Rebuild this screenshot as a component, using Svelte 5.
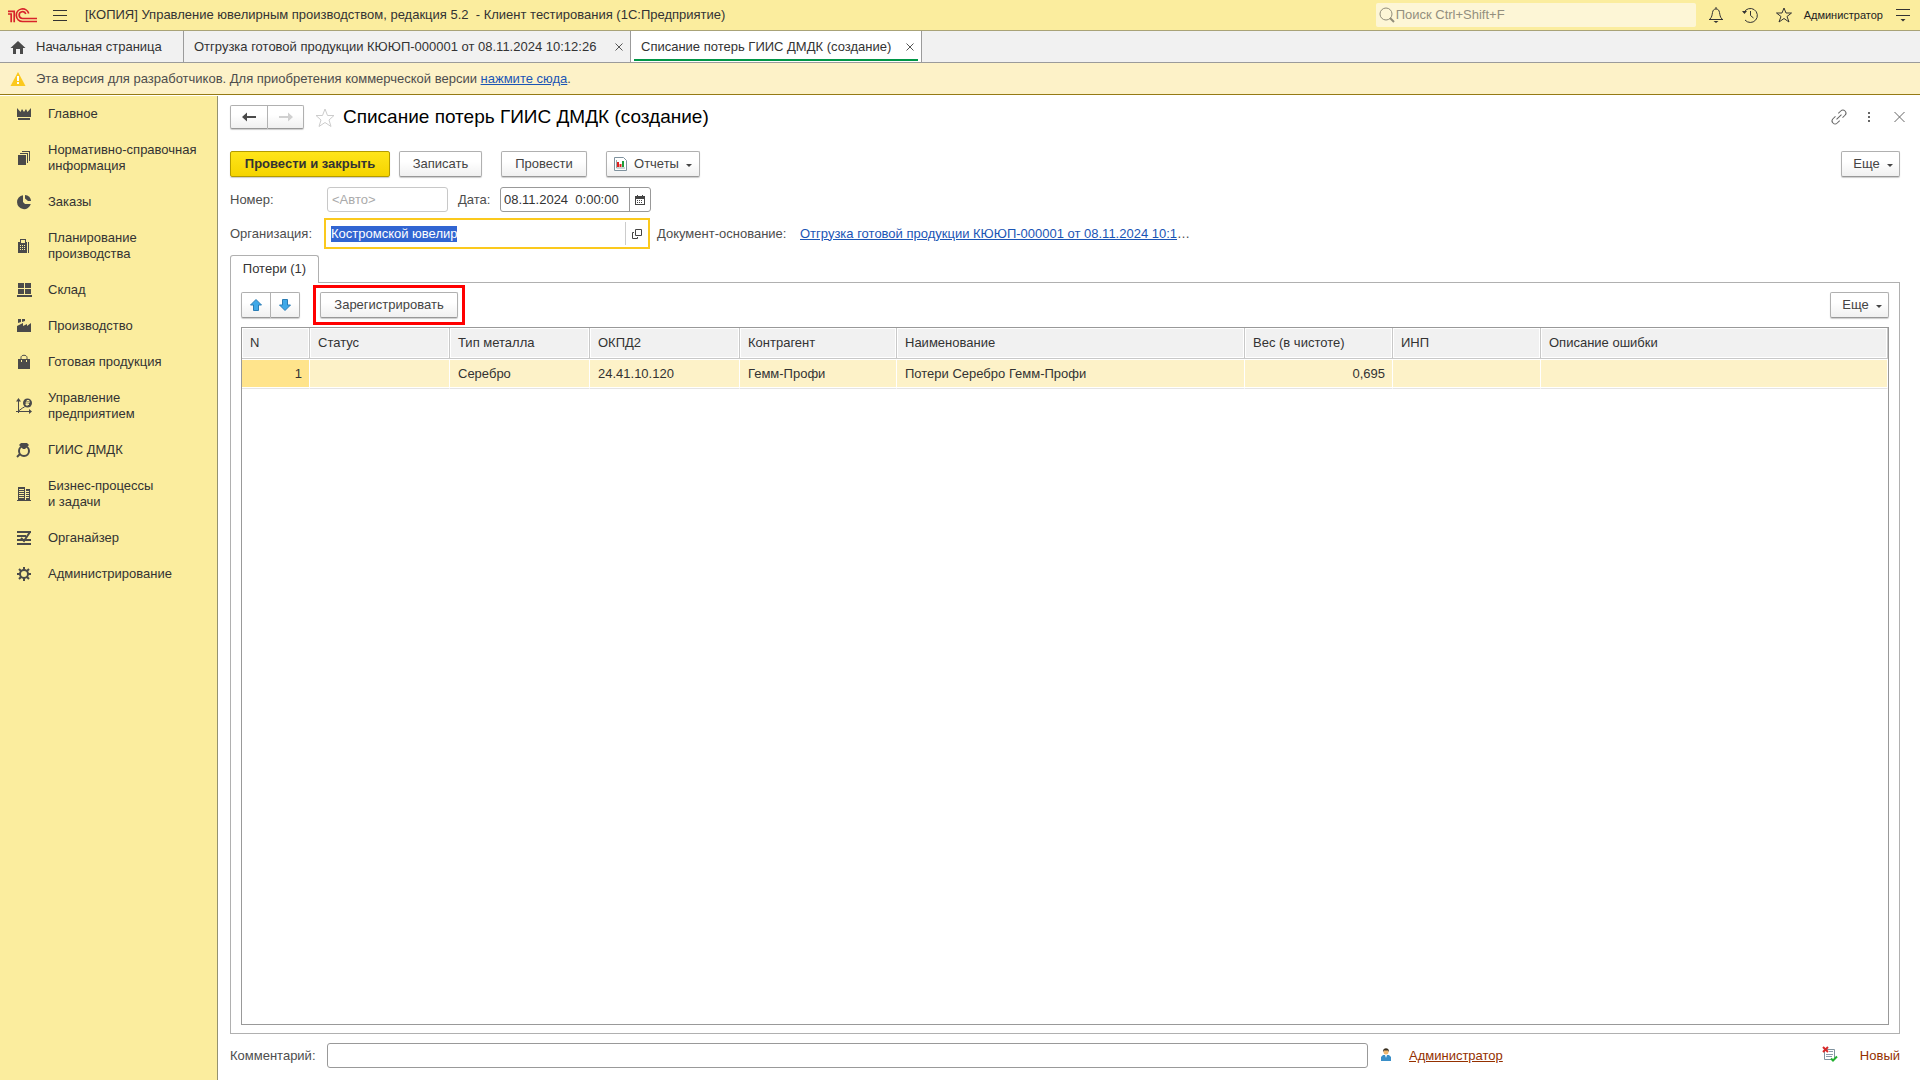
<script>
  import { onMount } from 'svelte';

  let orgInput;
  let org = $state('Костромской ювелир');
  let date = $state('08.11.2024  0:00:00');
  let comment = $state('');

  const sections = [
    { icon: 'crown', lines: ['Главное'] },
    { icon: 'docs', lines: ['Нормативно-справочная', 'информация'] },
    { icon: 'pie', lines: ['Заказы'] },
    { icon: 'calc', lines: ['Планирование', 'производства'] },
    { icon: 'boxes', lines: ['Склад'] },
    { icon: 'factory', lines: ['Производство'] },
    { icon: 'bag', lines: ['Готовая продукция'] },
    { icon: 'chart', lines: ['Управление', 'предприятием'] },
    { icon: 'ring', lines: ['ГИИС ДМДК'] },
    { icon: 'building', lines: ['Бизнес-процессы', 'и задачи'] },
    { icon: 'organizer', lines: ['Органайзер'] },
    { icon: 'gear', lines: ['Администрирование'] }
  ];

  const columns = [
    { name: 'N', cls: 'c-n', value: '1', right: true },
    { name: 'Статус', cls: 'c-status', value: '' },
    { name: 'Тип металла', cls: 'c-metal', value: 'Серебро' },
    { name: 'ОКПД2', cls: 'c-okpd', value: '24.41.10.120' },
    { name: 'Контрагент', cls: 'c-partner', value: 'Гемм-Профи' },
    { name: 'Наименование', cls: 'c-name', value: 'Потери Серебро Гемм-Профи' },
    { name: 'Вес (в чистоте)', cls: 'c-weight', value: '0,695', right: true },
    { name: 'ИНП', cls: 'c-inp', value: '' },
    { name: 'Описание ошибки', cls: 'c-error', value: '' }
  ];

  onMount(() => {
    orgInput.focus();
    orgInput.select();
  });
</script>

{#snippet sectionIcon(name)}
  <svg class="section-icon" viewBox="0 0 16 16" width="16" height="16" aria-hidden="true">
    {#if name === 'crown'}
      <path d="M1 2l3.500 4L6 3l2 3 2-3 1.500 3L15 2v9H1zM2 12h12v2H2z" />
    {:else if name === 'docs'}
      <path d="M2 5h8v10H2zM4 3h8v10h-1V4H4zM6 1h8v10h-1V2H6z" />
    {:else if name === 'pie'}
      <path d="M7 1.200A7 7 0 1 0 14.800 10H9L7 8z" /><path d="M9 1a6 6 0 0 1 6 6h-3L9 4.500z" />
    {:else if name === 'calc'}
      <path fill-rule="evenodd" d="M4 1h6v3h1v11H2V4h2zM5 2v3h4V2zM4 7v1h1V7zM6 7v1h1V7zM8 7v1h1V7zM4 9v1h1V9zM6 9v1h1V9zM8 9v1h1V9zM4 11v1h1v-1zM6 11v1h1v-1zM8 11v1h1v-1z" /><path d="M12 4h1v11h-1z" />
    {:else if name === 'boxes'}
      <path d="M2 1h6v5H2zM9 1h6v5H9zM2 7h6v5H2zM9 7h6v5H9zM1 13h15v2H1z" />
    {:else if name === 'factory'}
      <path d="M2 1h3v3L2 5zM6 1h3v2L6 4zM1 8l6-3v3l4-2v2l4-3v9H1z" />
    {:else if name === 'bag'}
      <path d="M2 5h12v10H2z" /><path class="line" d="M5 7V3.500C5 .5 11 .5 11 3.500V7" /><path class="light" d="M5.500 6v2M10.500 6v2" />
    {:else if name === 'chart'}
      <path d="M2.500 0L5 3.500H0zM16 13.500L13 11v5z" /><path class="line" d="M2.500 3v12M0 13.500h14M2.500 13l4-3 2-1" /><circle cx="11.500" cy="5" r="4.500" /><path class="light" d="M11 8V2.500h2v2.500H9.500M9.500 6.500H13" />
    {:else if name === 'ring'}
      <path d="M5 1h6l2 2-4 4H7L3 3z" /><circle class="thick" cx="8" cy="9" r="5" /><path class="thick" d="M4 12l-3 3" />
    {:else if name === 'building'}
      <path fill-rule="evenodd" d="M2 1h7v13H2zM3 3v1h5V3zM3 5v1h5V5zM3 7v1h5V7zM3 9v1h5V9zM3 11v1h5v-1zM10 3h4v11h-4zM10 5v1h3V5zM10 7v1h3V7zM10 9v1h3V9zM10 11v1h3v-1z" /><path d="M1 14h14v1H1z" />
    {:else if name === 'organizer'}
      <path d="M1 1h14v2H1zM1 5h9v2H1zM1 9h14v2H1zM1 13h14v2H1z" /><path class="thick" d="M14 2l-6 9-3-3" />
    {:else}
      <circle class="thick" cx="8" cy="8" r="4" /><path class="thick" d="M8 1v3M8 12v3M1 8h3M12 8h3M3 3l2 2M11 11l2 2M13 3l-2 2M5 11l-2 2" />
    {/if}
  </svg>
{/snippet}

<div class="app">
  <header class="titlebar">
    <svg class="logo" viewBox="0 0 29 15" width="29" height="15" role="img" aria-label="1С">
      <path d="M0 3.300H6.200V14.300M0 6h3.200v8.300" />
      <path d="M20.700 5.500A6.300 6.300 0 1 0 14.500 13.500H29M17.800 6A3.400 3.400 0 1 0 14.500 10.500H29" />
    </svg>
    <button class="icon-btn burger" aria-label="Главное меню">
      <svg viewBox="0 0 14 11" width="14" height="11"><path d="M0 .5h14M0 5.500h14M0 10.500h14" /></svg>
    </button>
    <h2 class="app-title">[КОПИЯ] Управление ювелирным производством, редакция 5.2&nbsp; - Клиент тестирования (1С:Предприятие)</h2>
    <label class="search">
      <svg viewBox="0 0 16 16" width="16" height="16"><circle cx="7" cy="7" r="6" /><path class="handle" d="M11 11l4 4" /></svg>
      <input type="search" placeholder="Поиск Ctrl+Shift+F" aria-label="Поиск" />
    </label>
    <div class="tools">
      <button class="icon-btn" aria-label="Уведомления">
        <svg viewBox="0 0 16 16" width="16" height="16"><path d="M8 0v2M1 12.500h14M2 12c2-2 2-4 2.500-6.500C5 3 6 2 8 2s3 1 3.500 3.500c.5 2.500.5 4.500 2.500 6.500" /><path class="solid" d="M5.500 14h5L8 16z" /></svg>
      </button>
      <button class="icon-btn" aria-label="История">
        <svg viewBox="0 0 16 16" width="16" height="16"><path d="M2 5.500A7 7 0 1 1 3 13M8.500 4v4.500l3 2.500" /><path class="solid" d="M0 4h5L2.500 7z" /></svg>
      </button>
      <button class="icon-btn" aria-label="Избранное">
        <svg viewBox="0 0 16 16" width="16" height="16"><path d="M8 1l2 5h5.500l-4.500 3.500 2 5.500-5-3.500L3 15l2-5.500L.5 6H6z" /></svg>
      </button>
    </div>
    <button class="user">Администратор</button>
    <button class="icon-btn" aria-label="Настройки">
      <svg viewBox="0 0 14 14" width="14" height="14"><path d="M0 1.500h14M0 7.500h14" /><path class="solid" d="M4.500 11h5L7 13.500z" /></svg>
    </button>
  </header>

  <nav class="tabs" aria-label="Открытые окна">
    <a class="tab home" href="#home">
      <svg viewBox="0 0 16 14" width="16" height="14"><path d="M8 1l7.500 7H13v6h-3V9H6v5H3V8H.5z" /></svg>
      Начальная страница
    </a>
    <div class="tab shipment">
      <a href="#shipment">Отгрузка готовой продукции КЮЮП-000001 от 08.11.2024 10:12:26</a>
      <button aria-label="Закрыть вкладку"><svg viewBox="0 0 8 8" width="8" height="8"><path d="M.5.5l7 7M7.500.5l-7 7" /></svg></button>
    </div>
    <div class="tab active">
      <a href="#losses">Списание потерь ГИИС ДМДК (создание)</a>
      <button aria-label="Закрыть вкладку"><svg viewBox="0 0 8 8" width="8" height="8"><path d="M.5.5l7 7M7.500.5l-7 7" /></svg></button>
    </div>
  </nav>

  <div class="notice">
    <svg viewBox="0 0 16 14" width="16" height="14"><path class="tri" d="M8 0l7.500 14H.5z" /><path class="mark" d="M7 4h2v5H7zM7 10h2v2H7z" /></svg>
    <p>Эта версия для разработчиков. Для приобретения коммерческой версии <a href="#buy">нажмите сюда</a>.</p>
  </div>

  <div class="body">
    <nav class="sections" aria-label="Разделы">
      {#each sections as s}
        <a href={'#' + s.icon}>
          {@render sectionIcon(s.icon)}
          <span>{#each s.lines as line, i}{#if i}<br />{/if}{line}{/each}</span>
        </a>
      {/each}
    </nav>

    <main>
      <div class="form-head">
        <div class="pair">
          <button class="btn nav-btn" aria-label="Назад"><svg viewBox="0 0 14 10" width="14" height="10"><path d="M0 5l5-4.500V4h9v2H5v3.500z" /></svg></button>
          <button class="btn nav-btn fwd" aria-label="Вперед" disabled><svg viewBox="0 0 14 10" width="14" height="10"><path d="M14 5L9 .5V4H0v2h9v3.500z" /></svg></button>
        </div>
        <button class="fav" aria-label="Добавить в избранное"><svg viewBox="0 0 20 19" width="20" height="19"><path d="M10 1l2.500 6.500h6.500l-5 4.500 2 6.500-6-4-6 4 2-6.500-5-4.500h6.500z" /></svg></button>
        <h1>Списание потерь ГИИС ДМДК (создание)</h1>
        <div class="head-tools">
          <button class="icon-btn" aria-label="Получить ссылку"><svg class="chain" viewBox="0 0 16 16" width="16" height="16"><path transform="rotate(-45 8 8)" d="M6 5H2.500a3 3 0 0 0 0 6H6M10 5h3.500a3 3 0 0 1 0 6H10M4.500 8h7" /></svg></button>
          <button class="icon-btn" aria-label="Дополнительно"><svg viewBox="0 0 16 16" width="16" height="16"><path class="solid" d="M7 3h2v2H7zM7 7h2v2H7zM7 11h2v2H7z" /></svg></button>
          <button class="icon-btn" aria-label="Закрыть"><svg viewBox="0 0 16 16" width="16" height="16"><path d="M3.500 3l10 10M13.500 3l-10 10" /></svg></button>
        </div>
      </div>

      <div class="commands">
        <button class="btn primary">Провести и закрыть</button>
        <button class="btn save">Записать</button>
        <button class="btn post">Провести</button>
        <button class="btn reports">
          <svg viewBox="0 0 13 14" width="13" height="14"><path class="sheet" d="M.5.5h9l3 3v10H.5z" /><path class="r" d="M3 5h2v5H3z" /><path class="g" d="M8 4h2v6H8z" /><path class="r" d="M5.500 7h2v3h-2z" /><path class="axis" d="M2.500 3v8H11" /></svg>
          Отчеты <i class="caret"></i>
        </button>
        <button class="btn more">Еще <i class="caret"></i></button>
      </div>

      <div class="field-row">
        <label class="first-label" for="number">Номер:</label>
        <input id="number" class="field number" placeholder="<Авто>" readonly />
        <label class="date-label" for="date">Дата:</label>
        <div class="field date">
          <input id="date" bind:value={date} />
          <button aria-label="Выбрать дату"><svg viewBox="0 0 10 10" width="10" height="10"><path fill-rule="evenodd" d="M0 1h2V0h1v1h4V0h1v1h2v9H0zM1 4v5h8V4z" /><path d="M2 5h1v1H2zM4 5h1v1H4zM6 5h1v1H6zM2 7h1v1H2zM4 7h1v1H4zM6 7h1v1H6z" /></svg></button>
        </div>
      </div>

      <div class="field-row org-row">
        <label class="first-label" for="org">Организация:</label>
        <div class="org">
          <input id="org" bind:this={orgInput} bind:value={org} />
          <button aria-label="Открыть"><svg viewBox="0 0 10 10" width="10" height="10"><path d="M3.500.5h6v6h-6zM2 3.500H.5v6h5V8" /></svg></button>
        </div>
        <span class="basis-label">Документ-основание:</span>
        <span class="basis"><a href="#basis">Отгрузка готовой продукции КЮЮП-000001 от 08.11.2024 10:1</a>…</span>
      </div>

      <div class="page-tabs" role="tablist">
        <button role="tab" aria-selected="true">Потери (1)</button>
      </div>

      <section class="panel">
        <div class="panel-bar">
          <div class="pair">
            <button class="btn arrow" aria-label="Переместить вверх"><svg viewBox="0 0 12 12" width="12" height="12"><path d="M6 .5l5.500 5.500H8.500v5.500h-5V6H.5z" /></svg></button>
            <button class="btn arrow down" aria-label="Переместить вниз"><svg viewBox="0 0 12 12" width="12" height="12"><path d="M6 11.500L.5 6h3V.5h5V6h3z" /></svg></button>
          </div>
          <div class="highlight"><button class="btn register">Зарегистрировать</button></div>
          <button class="btn more">Еще <i class="caret"></i></button>
        </div>
        <div class="grid">
          <table>
            <thead>
              <tr>{#each columns as c}<th class={c.cls} scope="col">{c.name}</th>{/each}</tr>
            </thead>
            <tbody>
              <tr>{#each columns as c}<td class={c.cls} class:right={c.right}>{c.value}</td>{/each}</tr>
            </tbody>
          </table>
        </div>
      </section>

      <footer>
        <label class="first-label" for="comment">Комментарий:</label>
        <input id="comment" class="field comment" bind:value={comment} />
        <svg class="person" viewBox="0 0 10 13" width="10" height="13"><path class="suit" d="M0 13V9l2-2h6l2 2v4z" /><path class="shirt" d="M4 7h2l-1 3z" /><circle class="face" cx="5" cy="4" r="2.500" /><path class="hair" d="M2 4c-.5-5 6.500-5 6 0L7 2.500H3z" /></svg>
        <a class="author" href="#author">Администратор</a>
        <svg class="state" viewBox="0 0 16 16" width="16" height="16"><path class="sheet" d="M2.500 3.500h10v10h-10z" /><path class="rows" d="M7 5.500h4M4 8.500h7M4 10.500h6" /><path class="cross" d="M1 1l5 5M6 1L1 6" /><path class="tick" d="M9 12.500l2 2 4-4" /></svg>
        <span class="state-text">Новый</span>
      </footer>
    </main>
  </div>
</div>

<style>
  :global(body) { margin: 0; background: #fff; }
  .app {
    display: flex;
    flex-direction: column;
    min-height: 100vh;
    font: 13px/16px 'Liberation Sans', Arial, sans-serif;
    color: #333;
  }
  .app :global(*) { box-sizing: border-box; }
  button, input { font: inherit; color: inherit; margin: 0; }
  button { padding: 0; border: 0; background: none; white-space: nowrap; }
  svg { flex: none; display: block; }
  a { color: inherit; text-decoration: none; }
  h1, h2, p { margin: 0; font-weight: normal; }

  .titlebar {
    display: flex;
    align-items: center;
    height: 31px;
    padding: 0 10px 0 8px;
    background: #fbed9e;
    border-bottom: 1px solid #a9a377;
  }
  .logo path { fill: none; stroke: #d8232a; stroke-width: 1.7; }
  .icon-btn svg { fill: none; stroke: #333; stroke-width: 1; }
  .icon-btn .solid { fill: #333; stroke: none; }
  .burger { margin: 0 18px 0 16px; }
  .app-title { font-size: 13px; white-space: nowrap; }
  .search {
    display: flex;
    align-items: center;
    gap: 1px;
    width: 320px;
    height: 24px;
    margin: 0 12px 0 auto;
    padding-left: 3px;
    background: #fdf6d6;
    border-radius: 2px;
  }
  .search svg { fill: none; stroke: #918d7a; }
  .search .handle { stroke-width: 2; }
  .search input { flex: 1; min-width: 0; border: 0; padding: 0; background: none; outline: 0; }
  .search input::placeholder { color: #938f7e; opacity: 1; }
  .tools { display: flex; gap: 18px; margin-right: 12px; }
  .user { font-size: 11px; margin-right: 13px; color: #222; }

  .tabs { display: flex; height: 32px; background: #f1f1f1; border-bottom: 1px solid #9b9b9b; }
  .tab {
    position: relative;
    display: flex;
    align-items: center;
    justify-content: space-between;
    gap: 8px;
    padding: 0 7px 0 10px;
    border-right: 1px solid #9b9b9b;
    white-space: nowrap;
  }
  .home { justify-content: flex-start; gap: 10px; width: 184px; }
  .shipment { width: 447px; }
  .home svg { fill: #4a4a4a; }
  .tab button svg { fill: none; stroke: #555; }
  .active { width: 291px; background: #fff; }
  .active::after {
    content: '';
    position: absolute;
    left: 3px;
    right: 3px;
    bottom: 1px;
    height: 2px;
    background: #009646;
  }

  .notice {
    display: flex;
    align-items: center;
    gap: 10px;
    height: 32px;
    padding-left: 10px;
    background: #fdf2c8;
    border-bottom: 1px solid #957a14;
    color: #4d4d4d;
  }
  .tri { fill: #fbc91d; }
  .mark { fill: #fff; }
  .notice a, .basis a { color: #1b55b5; text-decoration: underline; }

  .body { display: flex; flex: 1; margin-top: 1px; }
  .sections { flex: none; width: 218px; background: #fbed9e; border-right: 1px solid #94926f; }
  .sections a { display: flex; align-items: center; gap: 16px; padding: 10px 0 10px 16px; }
  .section-icon { fill: #4a4a4a; }
  .line, .thick, .light { fill: none; stroke: #4a4a4a; }
  .thick { stroke-width: 2; }
  .light { stroke: #fbed9e; }

  main { display: flex; flex-direction: column; flex: 1; min-width: 0; padding: 8px 20px 12px 12px; }
  .btn {
    display: flex;
    align-items: center;
    justify-content: center;
    height: 26px;
    border: 1px solid #b0b0b0;
    border-bottom-color: #989898;
    border-radius: 2px;
    background: linear-gradient(#fff 40%, #f0f0f0);
    box-shadow: 0 1px 1px #ccc;
    color: #444;
  }
  .pair { display: flex; }
  .pair .btn:first-child { border-radius: 2px 0 0 2px; }
  .pair .btn:last-child { border-left: 0; border-radius: 0 2px 2px 0; }
  .form-head { display: flex; align-items: center; height: 26px; }
  .nav-btn { width: 38px; height: 24px; fill: #4a4a4a; }
  .fwd { width: 36px; fill: #d0d0d0; }
  .fav { margin: 0 8px 0 11px; }
  .fav svg { fill: none; stroke: #ccc; }
  h1 { font-size: 19px; line-height: 24px; color: #000; white-space: nowrap; }
  .head-tools { display: flex; gap: 14px; margin: 0 -7px 0 auto; }
  .head-tools svg { stroke: #666; }
  .head-tools .solid { fill: #666; }
  .chain { overflow: visible; }

  .commands { display: flex; height: 26px; margin-top: 21px; }
  .primary {
    width: 160px;
    border-color: #b39b00;
    background: linear-gradient(#ffe51a, #f5d400);
    font-weight: bold;
    color: #333;
  }
  .save { width: 83px; margin-left: 9px; }
  .post { width: 86px; margin-left: 19px; }
  .reports { width: 94px; margin-left: 19px; gap: 7px; }
  .sheet { fill: #fff; stroke: #7f929e; }
  .r { fill: #e02020; }
  .g { fill: #1f9d3a; }
  .axis { fill: none; stroke: #9aa; }
  .caret { border: 3px solid transparent; border-top-color: #444; border-bottom: 0; margin-top: 3px; }
  .more { width: 59px; margin-left: auto; padding-left: 5px; gap: 7px; }

  .field-row { display: flex; align-items: center; height: 25px; margin-top: 10px; color: #4d4d4d; white-space: nowrap; }
  .first-label { flex: none; width: 97px; }
  .field { height: 25px; border: 1px solid #999; border-radius: 3px; background: #fff; color: #333; outline: 0; padding: 0 4px; }
  .number { width: 121px; border-color: #c8c8c8; }
  .number::placeholder { color: #aaa; opacity: 1; }
  .date-label { width: 34px; margin: 0 8px 0 10px; }
  .date { display: flex; width: 151px; padding: 0; }
  .date input { flex: 1; min-width: 0; border: 0; padding: 0 3px; background: none; outline: 0; white-space: pre; }
  .date button { width: 21px; border-left: 1px solid #999; display: grid; place-items: center; }
  .date svg { fill: #444; }
  .org-row { height: 31px; margin-top: 6px; }
  .org-row .first-label { width: 94px; }
  .org {
    display: flex;
    align-items: stretch;
    width: 326px;
    height: 31px;
    padding: 2px 0;
    border: 2px solid #fbc91d;
    background: #fff;
  }
  .org input { flex: 1; min-width: 0; border: 0; padding: 0 5px; outline: 0; }
  .org input::selection { background: #3165d2; color: #fff; }
  .org button { width: 23px; border-left: 1px solid #ccc; display: grid; place-items: center; }
  .org svg { fill: none; stroke: #444; }
  .basis-label { width: 136px; margin: 0 7px; }
  .basis { overflow: hidden; }

  .page-tabs { display: flex; height: 28px; margin: 6px 0 -1px; position: relative; }
  .page-tabs button {
    width: 89px;
    padding-bottom: 2px;
    border: 1px solid #b0b0b0;
    border-bottom: 0;
    border-radius: 3px 3px 0 0;
    background: #fff;
  }
  .panel {
    display: flex;
    flex-direction: column;
    flex: 1;
    border: 1px solid #b0b0b0;
    padding: 2px 10px 8px;
  }
  .panel-bar { display: flex; align-items: center; height: 40px; margin-bottom: 2px; }
  .arrow { width: 30px; }
  .down { width: 29px; }
  .arrow svg { fill: #3fa9e8; stroke: #2a7db5; }
  .highlight { border: 3px solid #f00; padding: 4px; margin-left: 13px; }
  .register { width: 138px; }
  .grid { flex: 1; border: 1px solid #999; background: #fff; }
  table { width: 100%; table-layout: fixed; border-collapse: separate; border-spacing: 0; }
  th, td { text-align: left; font-weight: normal; padding: 0 7px 0 8px; white-space: nowrap; overflow: hidden; }
  th {
    height: 31px;
    background: #f1f1f1;
    border-right: 1px solid #c8c8c8;
    border-bottom: 1px solid #c8c8c8;
    box-shadow: inset 0 0 0 1px #fff;
  }
  td { height: 30px; background: #fdf2c8; border-right: 1px solid #fff; border-bottom: 1px solid #e4e4e4; box-shadow: inset 0 1px #fff, inset 0 -1px #fff; }
  td.right { text-align: right; }
  td.c-n { background: #ffe48c; }
  .c-n { width: 68px; }
  .c-status, .c-metal { width: 140px; }
  .c-okpd { width: 150px; }
  .c-partner { width: 157px; }
  .c-name { width: 348px; }
  .c-weight, .c-inp { width: 148px; }

  footer { display: flex; align-items: center; height: 25px; margin-top: 9px; color: #4d4d4d; }
  .comment { flex: 0 1 1041px; min-width: 100px; }
  .person { margin: 0 18px 3px 13px; }
  .suit { fill: #3a8fc8; }
  .shirt { fill: #fff; }
  .face { fill: #f0b870; }
  .hair { fill: #3a3020; }
  .author, .state-text { color: #943000; }
  .author { text-decoration: underline; }
  .state { margin: 0 22px 3px auto; }
  .rows { fill: none; stroke: #8a9aaa; }
  .cross { fill: none; stroke: #d82a2a; stroke-width: 2; }
  .tick { fill: none; stroke: #22b030; stroke-width: 2; }
</style>
